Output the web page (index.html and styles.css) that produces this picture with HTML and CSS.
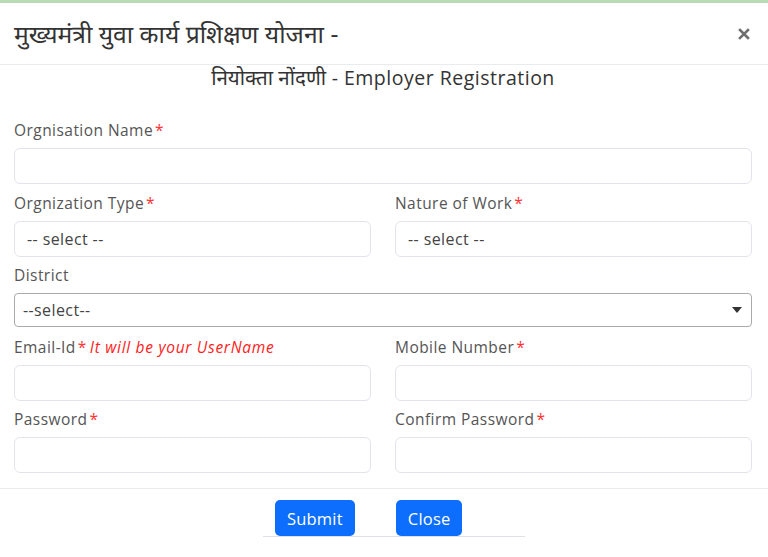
FILE: index.html
```html
<!DOCTYPE html>
<html lang="hi">
<head>
<meta charset="utf-8">
<title>Employer Registration</title>
<link rel="stylesheet" href="styles.css">
</head>
<body>
<div class="modal">
  <div class="modal-header">
    <h4 class="modal-title">मुख्यमंत्री युवा कार्य प्रशिक्षण योजना -</h4>
    <button class="btn-x" aria-label="Close">
      <svg width="12" height="12" viewBox="0 0 12 12"><path d="M2 2L10 10M10 2L2 10" stroke="#6f6f6f" stroke-width="2.6" stroke-linecap="square"/></svg>
    </button>
  </div>
  <div class="modal-body">
    <h5 class="subtitle"><span class="deva">नियोक्ता नोंदणी</span> - Employer Registration</h5>
    <div class="field first">
      <label class="lbl">Orgnisation Name<span class="req">*</span></label>
      <div class="input"></div>
    </div>
    <div class="row">
      <div class="field">
        <label class="lbl">Orgnization Type<span class="req">*</span></label>
        <div class="input sel"><span>-- select --</span></div>
      </div>
      <div class="field">
        <label class="lbl">Nature of Work<span class="req">*</span></label>
        <div class="input sel"><span>-- select --</span></div>
      </div>
    </div>
    <div class="field district">
      <label class="lbl">District</label>
      <div class="select2"><span>--select--</span><b class="arrow"></b></div>
    </div>
    <div class="row">
      <div class="field">
        <label class="lbl">Email-Id<span class="req">*</span><em class="hint">It will be your UserName</em></label>
        <div class="input"></div>
      </div>
      <div class="field">
        <label class="lbl">Mobile Number<span class="req">*</span></label>
        <div class="input"></div>
      </div>
    </div>
    <div class="row">
      <div class="field">
        <label class="lbl">Password<span class="req">*</span></label>
        <div class="input"></div>
      </div>
      <div class="field">
        <label class="lbl">Confirm Password<span class="req">*</span></label>
        <div class="input"></div>
      </div>
    </div>
  </div>
  <div class="modal-footer">
    <div class="btn-group">
      <button class="btn">Submit</button>
      <button class="btn">Close</button>
    </div>
  </div>
</div>
</body>
</html>
```
FILE: styles.css
```css
* { box-sizing: border-box; }
body {
  margin: 0;
  background: #fff;
  font-family: "Open Sans", "Noto Sans Devanagari", "Noto Sans", sans-serif;
  color: #444;
}
.modal {
  border-top: 3px solid #b9dbb4;
  width: 768px;
}
.modal-header {
  height: 62px;
  display: flex;
  align-items: center;
  justify-content: space-between;
  padding: 0 16px 0 14px;
  border-bottom: 1px solid #e9ecef;
}
.modal-title {
  margin: 0;
  font-size: 24.7px;
  font-weight: 400;
  color: #333;
  line-height: 30px;
}
.btn-x {
  border: 0;
  background: none;
  padding: 0;
  width: 16px;
  height: 16px;
  display: flex;
  align-items: center;
  justify-content: center;
}
.modal-body {
  padding: 0 16px 8px 14px;
  border-bottom: 1px solid #e9ecef;
}
.subtitle {
  margin: 0;
  text-align: center;
  font-size: 19.5px;
  font-weight: 500;
  letter-spacing: 0.5px;
  color: #333;
  line-height: 24px;
  padding-bottom: 29px;
}
.deva { font-weight: 400; letter-spacing: 0; font-size: 20.5px; }
.field {
  display: flex;
  flex-direction: column;
  margin-bottom: 7px;
}
.field.first { margin-bottom: 8px; }
.field.district { margin-bottom: 9px; }
.lbl {
  font-size: 15.5px;
  letter-spacing: 0.45px;
  line-height: 22px;
  color: #555;
  margin-bottom: 7px;
}
.req { color: #f33; margin-left: 2px; }
.hint { color: #f22; margin-left: 3px; letter-spacing: 0.7px; }
.input {
  height: 36px;
  border: 1px solid #e1e4ea;
  border-radius: 6px;
  display: flex;
  align-items: center;
  padding: 0 12px;
  font-size: 16px;
  letter-spacing: 0.4px;
  color: #444;
}
.row {
  display: grid;
  grid-template-columns: 1fr 1fr;
  column-gap: 24px;
}
.select2 {
  height: 34px;
  border: 1px solid #aaa;
  border-radius: 4px;
  display: flex;
  align-items: center;
  justify-content: space-between;
  padding: 0 9px 0 8px;
  font-size: 16px;
  letter-spacing: 0.4px;
  color: #444;
}
.arrow {
  width: 0;
  height: 0;
  border-left: 5px solid transparent;
  border-right: 5px solid transparent;
  border-top: 6px solid #333;
}
.modal-footer {
  display: flex;
  justify-content: center;
  padding: 11px 0 0 20px;
}
.btn-group {
  width: 262px;
  display: flex;
  gap: 41px;
  padding-left: 12px;
  border-bottom: 1px solid #dee2e6;
}
.btn {
  height: 36px;
  border: 0;
  border-radius: 5px;
  background: #0d6efd;
  color: #fff;
  font-family: inherit;
  font-size: 16.5px;
  letter-spacing: 0.2px;
  padding: 0 12px;
}
```
